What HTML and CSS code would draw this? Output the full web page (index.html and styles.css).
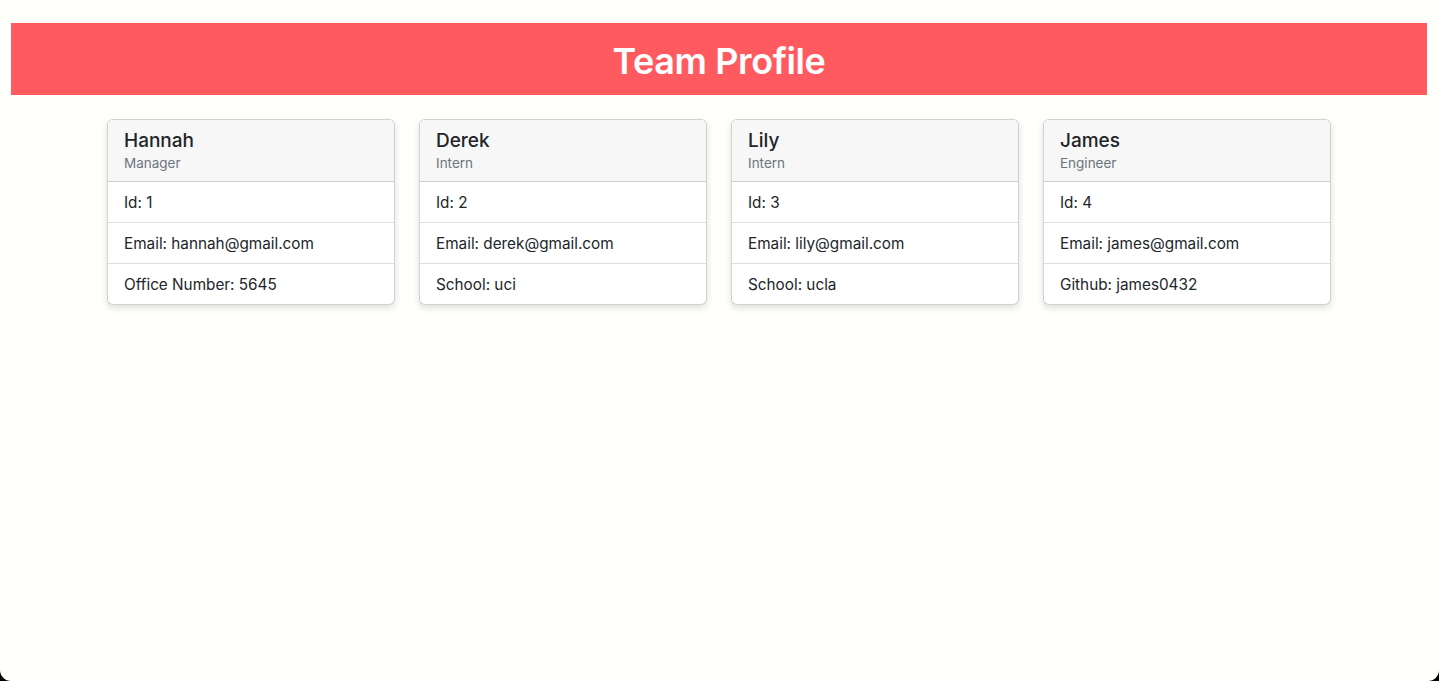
FILE: index.html
```html
<!DOCTYPE html>
<html lang="en">
<head>
<meta charset="utf-8">
<title>Team Profile</title>
<link rel="stylesheet" href="styles.css">
</head>
<body>
<div class="page">
  <header class="banner"><h1>Team Profile</h1></header>
  <main class="cards">
    <div class="card">
      <div class="card-head"><div class="name">Hannah</div><div class="role">Manager</div></div>
      <ul class="items"><li>Id: 1</li><li>Email: hannah@gmail.com</li><li>Office Number: 5645</li></ul>
    </div>
    <div class="card">
      <div class="card-head"><div class="name">Derek</div><div class="role">Intern</div></div>
      <ul class="items"><li>Id: 2</li><li>Email: derek@gmail.com</li><li>School: uci</li></ul>
    </div>
    <div class="card">
      <div class="card-head"><div class="name">Lily</div><div class="role">Intern</div></div>
      <ul class="items"><li>Id: 3</li><li>Email: lily@gmail.com</li><li>School: ucla</li></ul>
    </div>
    <div class="card">
      <div class="card-head"><div class="name">James</div><div class="role">Engineer</div></div>
      <ul class="items"><li>Id: 4</li><li>Email: james@gmail.com</li><li>Github: james0432</li></ul>
    </div>
  </main>
</div>
</body>
</html>
```
FILE: styles.css
```css
html, body {
  margin: 0;
  height: 100%;
  background: #000;
}
body {
  font-family: Inter, "Liberation Sans", sans-serif;
  color: #212529;
}
.page {
  height: 100%;
  box-sizing: border-box;
  background: #fffffb;
  border-radius: 0 0 11px 11px;
  padding: 23px 12px 0 11px;
  overflow: hidden;
}
.banner {
  background: #ff5a5f;
  height: 72px;
  box-sizing: border-box;
  padding-top: 3px;
  display: flex;
  align-items: center;
  justify-content: center;
}
.banner h1 {
  margin: 0;
  color: #fff;
  font-size: 36px;
  font-weight: 600;
  letter-spacing: -0.4px;
}
.cards {
  display: flex;
  justify-content: center;
  gap: 24px;
  margin-top: 24px;
}
.card {
  width: 288px;
  box-sizing: border-box;
  background: #fff;
  border: 1px solid rgba(0,0,0,0.18);
  border-radius: 6px;
  box-shadow: 0 3px 7px rgba(0,0,0,0.13);
  overflow: hidden;
}
.card-head {
  background: #f7f7f7;
  border-bottom: 1px solid rgba(0,0,0,0.17);
  padding: 9px 16px 9px;
}
.name {
  font-size: 19px;
  line-height: 24px;
  font-weight: 500;
  color: #212529;
}
.role {
  margin-top: 2px;
  font-size: 13.5px;
  line-height: 17px;
  color: #6c757d;
}
.items {
  list-style: none;
  margin: 0;
  padding: 0;
}
.items li {
  padding: 9px 16px 7px;
  line-height: 24px;
  font-size: 15.3px;
  border-top: 1px solid rgba(0,0,0,0.13);
}
.items li:first-child {
  border-top: none;
}
```
